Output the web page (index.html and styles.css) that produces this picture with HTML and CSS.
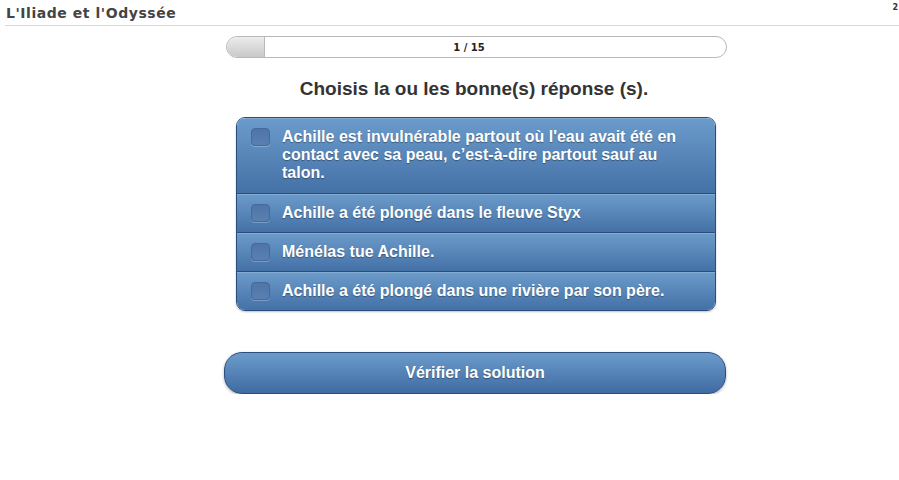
FILE: index.html
```html
<!DOCTYPE html>
<html lang="fr">
<head>
<meta charset="utf-8">
<title>L'Iliade et l'Odyssée</title>
<link rel="stylesheet" href="styles.css">
</head>
<body>
<header class="topbar">
  <h1 class="title">L'Iliade et l'Odyssée</h1>
  <span class="pagenum">2</span>
</header>
<main class="main">
  <div class="progress">
    <div class="progress-fill" style="width:37px"></div>
    <span class="progress-label">1 / 15</span>
  </div>
  <h2 class="question">Choisis la ou les bonne(s) réponse (s).</h2>
  <ul class="answers">
    <li class="answer"><span class="check"></span><span class="answer-text">Achille est invulnérable partout où l'eau avait été en contact avec sa peau, c’est-à-dire partout sauf au talon.</span></li>
    <li class="answer"><span class="check"></span><span class="answer-text">Achille a été plongé dans le fleuve Styx</span></li>
    <li class="answer"><span class="check"></span><span class="answer-text">Ménélas tue Achille.</span></li>
    <li class="answer"><span class="check"></span><span class="answer-text">Achille a été plongé dans une rivière par son père.</span></li>
  </ul>
  <button class="verify">Vérifier la solution</button>
</main>
</body>
</html>
```
FILE: styles.css
```css
html, body {
  margin: 0;
  padding: 0;
  background: #fff;
}
body {
  font-family: "Liberation Sans", Arial, sans-serif;
  width: 899px;
  overflow: hidden;
}
.topbar {
  display: flex;
  align-items: center;
  justify-content: space-between;
  height: 25px;
  margin-left: 5px;
  border-bottom: 1px solid #d8d8d8;
}
.title {
  margin: 0 0 0 1px;
  font-family: "DejaVu Sans", Verdana, sans-serif;
  font-weight: bold;
  font-size: 14px;
  color: #444;
  letter-spacing: 0.55px;
  line-height: 24px;
}
.pagenum {
  font-family: "DejaVu Sans", Verdana, sans-serif;
  font-size: 8px;
  font-weight: bold;
  color: #333;
  margin-right: 1px;
  align-self: flex-start;
  margin-top: 3px;
}
.main {
  padding-left: 53px;
  display: flex;
  flex-direction: column;
  align-items: center;
}
.progress {
  position: relative;
  margin-top: 10px;
  width: 499px;
  height: 20px;
  border: 1px solid #b8b8b8;
  border-radius: 11px;
  overflow: hidden;
  background: #fff;
  display: flex;
  align-items: center;
  justify-content: center;
}
.progress-fill {
  position: absolute;
  left: 0;
  top: 0;
  bottom: 0;
  background: linear-gradient(#ececec, #c9c9c9);
  border-right: 1px solid #b8b8b8;
}
.progress-label {
  position: relative;
  font-family: "DejaVu Sans", Verdana, sans-serif;
  font-weight: bold;
  font-size: 10px;
  color: #222;
  margin-left: -14px;
}
.question {
  margin: 20px 0 0 -4px;
  font-size: 19px;
  line-height: 22px;
  font-weight: bold;
  color: #333;
}
.answers {
  list-style: none;
  margin: 17px 0 0 0;
  padding: 0;
  width: 478px;
  border: 1px solid #2b4d7c;
  border-radius: 9px;
  overflow: hidden;
  box-shadow: 0 1px 2px rgba(0,0,0,0.25);
}
.answer {
  display: flex;
  align-items: flex-start;
  padding: 10px 12px 10px 14px;
  background: linear-gradient(#6b9bcb, #4471a6);
  border-top: 1px solid #2b4d7c;
  box-shadow: inset 0 1px 0 rgba(255,255,255,0.18);
}
.answer:first-child {
  border-top: none;
  padding-top: 10px;
  padding-bottom: 11px;
}
.check {
  flex: none;
  box-sizing: border-box;
  width: 19px;
  height: 18px;
  border-radius: 4px;
  background: linear-gradient(#4f74a6, #5a80b2);
  border: 1px solid #46699a;
  box-shadow: 0 1px 0 rgba(255,255,255,0.25);
}
.answer-text {
  margin-left: 12px;
  font-size: 16px;
  line-height: 18px;
  font-weight: bold;
  color: #fff;
  text-shadow: 0 1px 1px rgba(0,0,0,0.35);
}
.verify {
  margin: 41px 0 0 -2px;
  width: 502px;
  height: 42px;
  border: 1px solid #2b4d7c;
  border-radius: 18px;
  background: linear-gradient(#6b9bcb, #3f6ba2);
  box-shadow: 0 1px 3px rgba(0,0,0,0.3);
  font-family: "Liberation Sans", Arial, sans-serif;
  font-weight: bold;
  font-size: 16px;
  color: #fff;
  text-shadow: 0 1px 1px rgba(0,0,0,0.35);
  padding: 0;
}
```
